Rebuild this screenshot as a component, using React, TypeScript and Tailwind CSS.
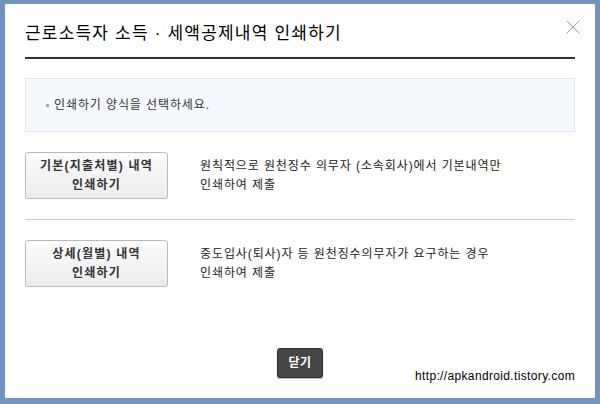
import React from "react";

const font = { fontFamily: '"Liberation Sans", "Noto Sans CJK KR", sans-serif' };

function PrintRow({ label1, label2, desc1, desc2 }: { label1: string; label2: string; desc1: string; desc2: string }) {
  return (
    <div className="flex items-center gap-[32px]">
      <button className="w-[143px] h-[47px] rounded-[3px] border border-[#b9b9b9] bg-gradient-to-b from-[#fbfbfb] to-[#ebebeb] text-[12px] font-bold leading-[19px] text-[#333] tracking-[1.2px] flex flex-col items-center justify-center">
        <span>{label1}</span>
        <span>{label2}</span>
      </button>
      <div className="text-[12px] leading-[19px] text-[#222] pt-[1px] tracking-[0.9px]">
        <div>{desc1}</div>
        <div>{desc2}</div>
      </div>
    </div>
  );
}

export default function App() {
  return (
    <div className="w-[600px] h-[404px] bg-[#7593bf] pt-[4px] pl-[5px] pr-[5px] pb-[6px]" style={font}>
      <div className="relative w-full h-full bg-white px-[20px] flex flex-col">
        <div className="pt-[20px] pb-[13px] border-b-2 border-[#333]">
          <h1 className="text-[17px] leading-[20px] text-black tracking-[1.2px]">근로소득자 소득 · 세액공제내역 인쇄하기</h1>
        </div>
        <button className="absolute right-[14px] top-[15px] w-[16px] h-[16px] text-[#999]">
          <svg width="16" height="16" viewBox="0 0 16 16" fill="none" stroke="#9a9a9a" strokeWidth="1">
            <path d="M1.5 1.5 L14.5 14.5 M14.5 1.5 L1.5 14.5" />
          </svg>
        </button>
        <div className="mt-[19px] h-[54px] bg-[#f5f8fc] border border-[#e1e7ef] flex items-center pl-[20px] text-[12px] text-[#333] tracking-[0.9px]">
          <span className="w-[3px] h-[3px] bg-[#aaa] mr-[5px]" />
          <span>인쇄하기 양식을 선택하세요.</span>
        </div>
        <div className="mt-[20px]">
          <PrintRow
            label1="기본(지출처별) 내역"
            label2="인쇄하기"
            desc1="원칙적으로 원천징수 의무자 (소속회사)에서 기본내역만"
            desc2="인쇄하여 제출"
          />
        </div>
        <div className="mt-[20px] h-px bg-[#c8c8c8]" />
        <div className="mt-[20px]">
          <PrintRow
            label1="상세(월별) 내역"
            label2="인쇄하기"
            desc1="중도입사(퇴사)자 등 원천징수의무자가 요구하는 경우"
            desc2="인쇄하여 제출"
          />
        </div>
        <div className="flex-1" />
        <div className="flex justify-center pb-[20px]">
          <button className="w-[46px] h-[30px] rounded-[3px] bg-[#454545] border border-[#333] text-white text-[12px] font-bold shadow-[0_1px_1px_rgba(0,0,0,0.3)] tracking-[0.5px]">닫기</button>
        </div>
        <span className="absolute right-[20px] bottom-[13px] text-[12px] text-black tracking-[0.35px]">http://apkandroid.tistory.com</span>
      </div>
    </div>
  );
}
